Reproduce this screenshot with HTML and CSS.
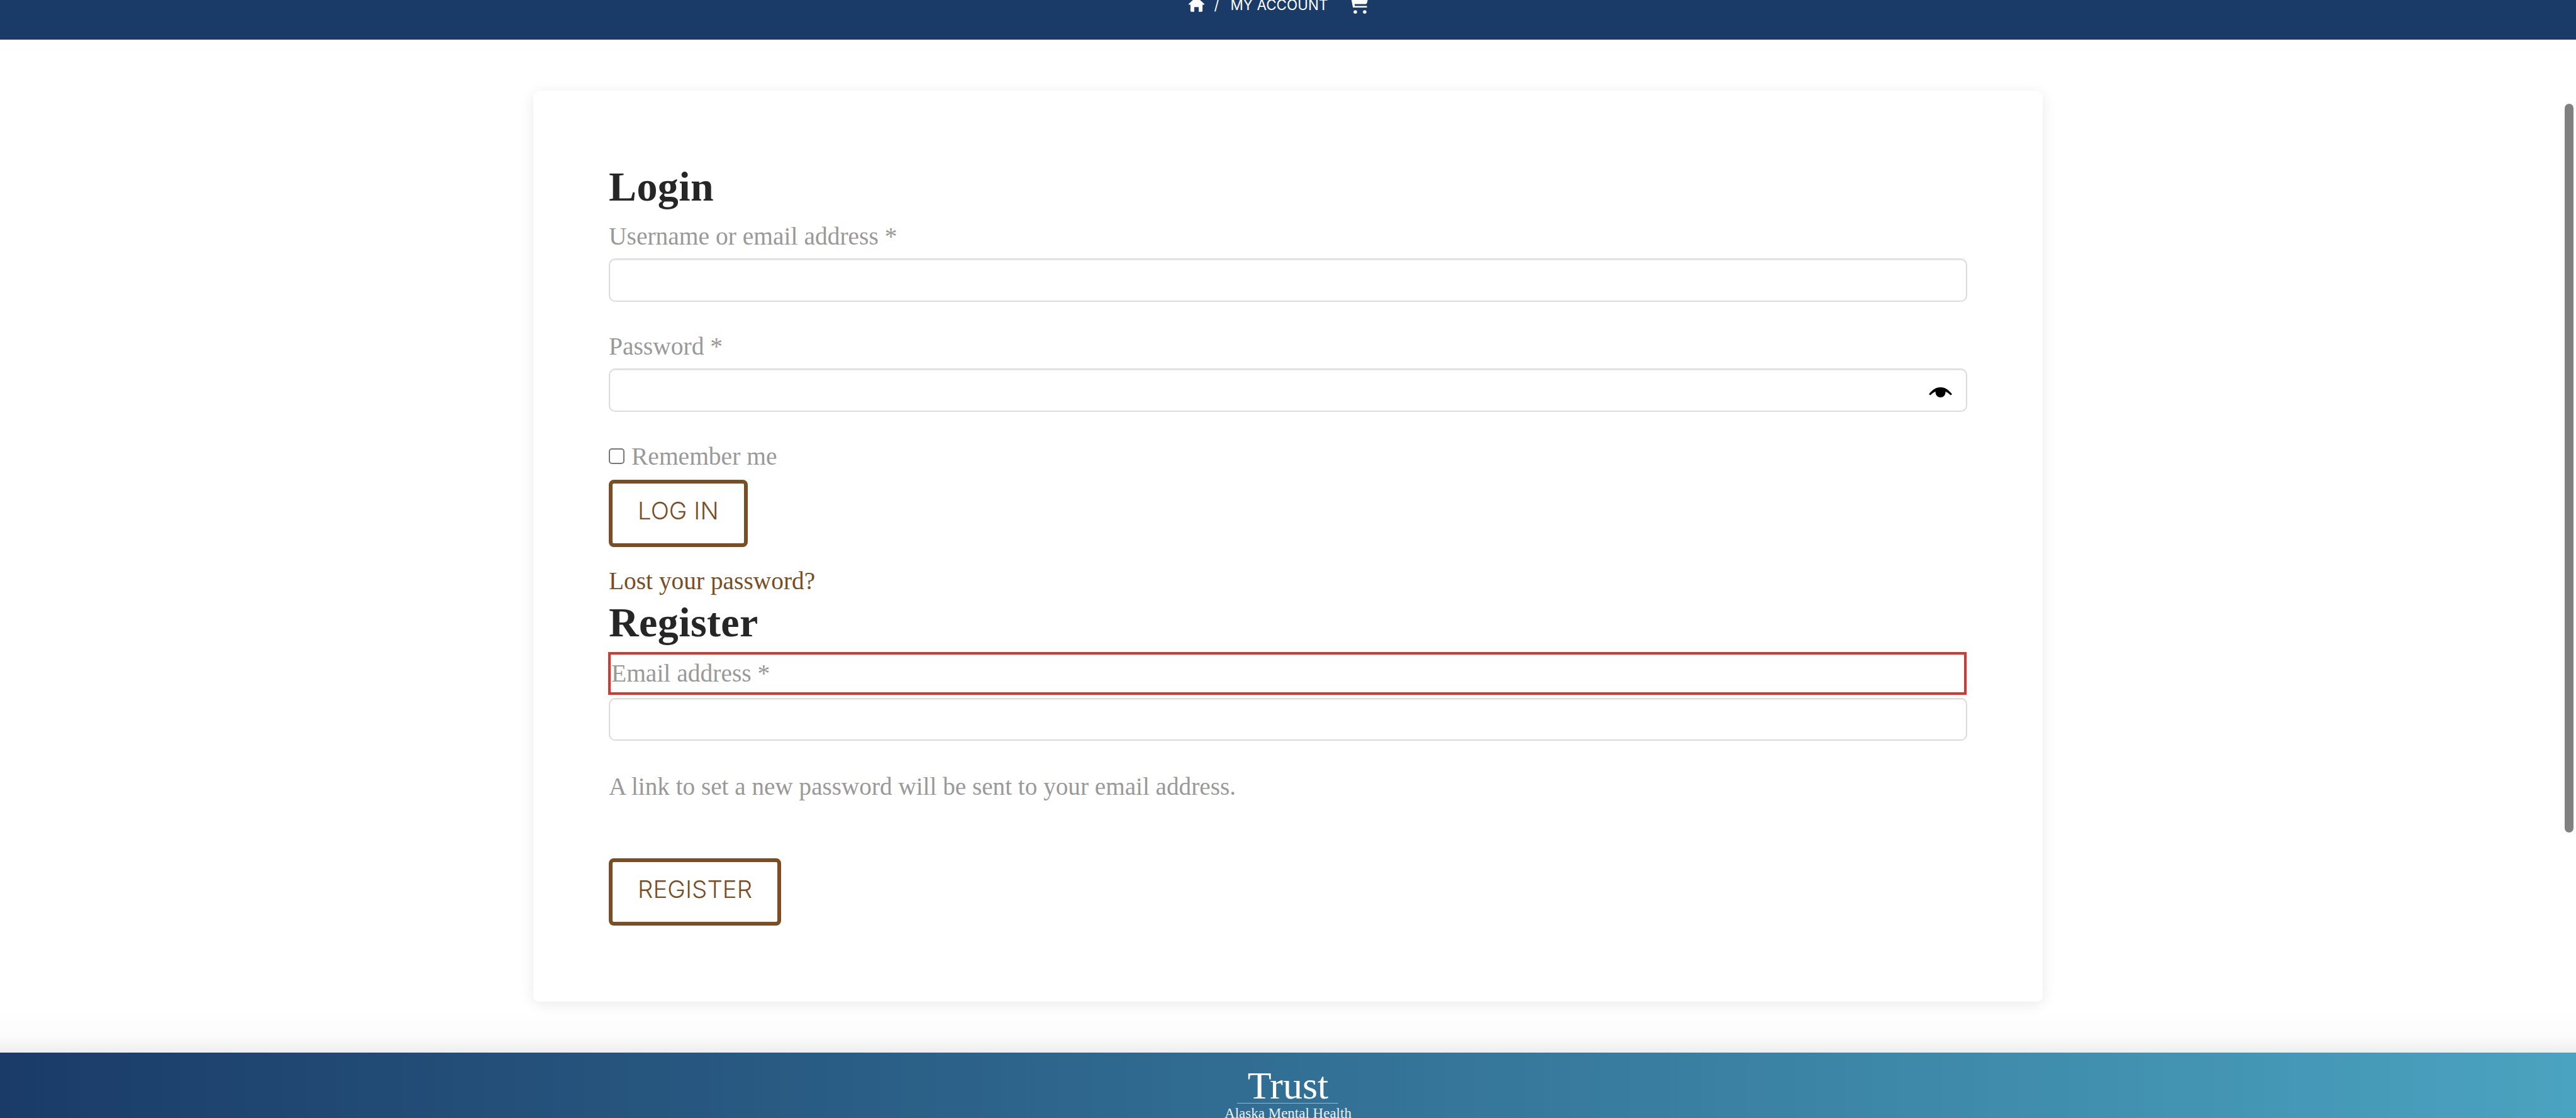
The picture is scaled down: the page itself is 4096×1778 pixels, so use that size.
FILE: index.html
```html
<!DOCTYPE html>
<html lang="en">
<head>
<meta charset="utf-8">
<title>My Account</title>
<link rel="stylesheet" href="styles.css">
</head>
<body>
<header class="topbar">
  <nav class="crumbs">
    <svg class="home" viewBox="0 0 25 24" aria-hidden="true"><path d="M12.500 0 25 11.200c.5.6 0 1.400-.7 1.400h-2.200v9.400c0 1-.8 1.800-1.800 1.800h-4.200v-7.500H8.900v7.500H4.700c-1 0-1.800-.8-1.800-1.800v-9.400H.7c-.7 0-1.200-.8-.7-1.400z"/></svg>
    <span class="sep">/</span>
    <a class="acct">MY ACCOUNT</a>
    <svg class="cart" viewBox="0 0 30 30" aria-hidden="true"><path d="M0 0h30l-2.400 9.500c-.3 1.200-1.300 2-2.500 2H7.800l.5 3h19.200v2.600H6.300c-.7 0-1.200-.4-1.300-1.100L2 0z"/><circle cx="9" cy="24" r="2.800"/><circle cx="24" cy="24" r="2.800"/></svg>
  </nav>
</header>
<main class="page">
  <section class="card">
    <h2 class="title first">Login</h2>
    <label class="label">Username or email address *</label>
    <input class="field" type="text">
    <label class="label spaced">Password *</label>
    <div class="pw">
      <input class="field" type="password">
      <svg class="eye" viewBox="0 0 37 16" aria-hidden="true"><path d="M0 11C6 3 12 0 18.500 0S31 3 37 11l-2.500 1.500C30 7.500 24 5 18.500 5S7 7.500 2.500 12.500z"/><circle cx="18.500" cy="8" r="8"/></svg>
    </div>
    <label class="check"><span class="box"></span>Remember me</label>
    <a class="btn login">LOG IN</a>
    <a class="lost">Lost your password?</a>
    <h2 class="title">Register</h2>
    <label class="label flagged">Email address *</label>
    <input class="field tight" type="email">
    <p class="note">A link to set a new password will be sent to your email address.</p>
    <a class="btn register">REGISTER</a>
  </section>
</main>
<footer class="foot">
  <div class="logo">
    <div class="trust">Trust</div>
    <div class="rule"></div>
    <div class="sub">Alaska Mental Health</div>
  </div>
</footer>
<div class="thumb"></div>
</body>
</html>
```

FILE: styles.css
```css
* { box-sizing: border-box; }
html, body { margin: 0; height: 1778px; overflow: hidden; background: #fff; }
body { font-family: "Liberation Serif", serif; color: #999; position: relative; }

.topbar { height: 63px; background: #1a3b68; display: flex; justify-content: center; align-items: flex-end; overflow: hidden; padding-bottom: 39px; }
.crumbs { display: flex; align-items: center; color: #fff; height: 24px; margin-right: 30px; }
.home { width: 25px; height: 24px; fill: #fff; margin-top: -10px; }
.sep { font: 400 22px "Inter", sans-serif; margin: -8px 18px 0 16px; }
.acct { font: 400 22.500px/24px "Inter", sans-serif; width: 155px; margin-top: -9px; white-space: nowrap; }
.cart { width: 30px; height: 30px; fill: #fff; margin: -4px 0 0 35px; }

.page { height: 1611px; padding-top: 81px; background: linear-gradient(to bottom, #fff 0, #fff 1540px, #fcfcfc 1585px, #eeeeee 100%); }
.card { width: 2400px; height: 1449px; margin: 0 auto; padding: 0 120px; background: #fff; border-radius: 10px; box-shadow: 0 4px 22px rgba(0,0,0,.09); display: flex; flex-direction: column; align-items: flex-start; }

.title { margin: 0; font: 700 66px/64px "Liberation Serif", serif; letter-spacing: .4px; color: #262626; }
.first { margin-top: 121px; }
.label { display: block; font-size: 39.5px; line-height: 48px; margin: 23px 0 11px; }
.label.spaced { margin: 47px 0 11px; }
.flagged { width: 2160px; height: 68px; margin: 15px 0 5px -1px; padding-left: 1px; border: 4px solid #e5302a; line-height: 60px; }

.field { display: block; width: 2160px; height: 69px; border: 2px solid #dcdcdc; border-radius: 10px; background: #fff; box-shadow: inset 0 1px 2px rgba(0,0,0,.08); }
.tight { height: 68px; }
.pw { position: relative; width: 2160px; }
.eye { position: absolute; right: 24px; top: 30px; width: 37px; height: 16px; fill: #000; }

.check { display: flex; align-items: center; font-size: 39.5px; line-height: 48px; margin: 47px 0 13px; }
.box { width: 25px; height: 25px; border: 2px solid #767676; border-radius: 5px; margin-right: 11px; margin-top: -2px; }

.btn { display: flex; align-items: center; height: 107px; padding: 0 40px 10px; border: 6px solid #7a4d22; border-radius: 8px; color: #7a4d22; font: 300 38.500px "Inter", sans-serif; }
.lost { display: block; font-size: 39.4px; line-height: 48px; color: #7a4d22; margin-top: 30px; }
.lost + .title { margin-top: 10px; }
.note { margin: 49px 0 90px; font-size: 39.2px; line-height: 48px; }

.foot { height: 104px; overflow: hidden; background: linear-gradient(to right, #1a3b68 0%, #4aa3c0 100%); display: flex; justify-content: center; }
.logo { display: flex; flex-direction: column; align-items: center; color: #fff; padding-top: 24px; }
.trust { font: 400 62px/56px "Liberation Serif", serif; }
.rule { width: 161px; height: 1px; flex: none; margin-bottom: 1px; background: rgba(255,255,255,.5); }
.sub { font: 400 23px/30px "Liberation Serif", serif; white-space: nowrap; opacity: .9; }

.thumb { position: absolute; right: 4px; top: 165px; width: 14px; height: 1159px; background: #808080; border-radius: 7px; }
```
